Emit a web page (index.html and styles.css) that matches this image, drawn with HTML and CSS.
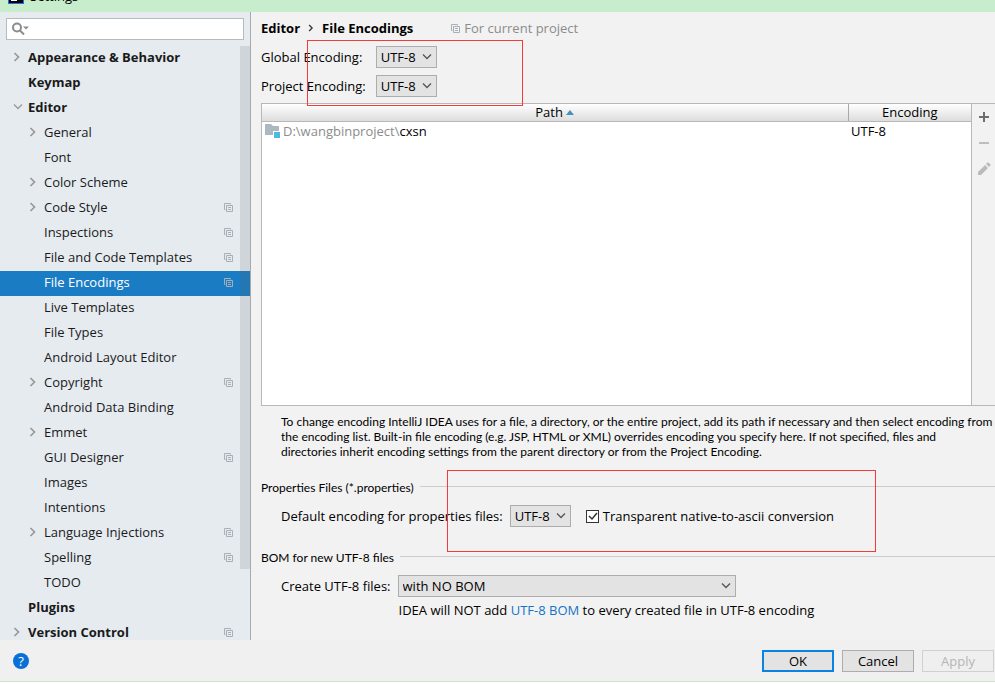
FILE: index.html
```
<!DOCTYPE html>
<html lang="en">
<head>
<meta charset="utf-8">
<title>Settings</title>
<link rel="stylesheet" href="styles.css">
</head>
<body>
<svg class="defs" aria-hidden="true">
  <symbol id="right" viewBox="0 0 8 10"><path d="M1.5 1 5.5 5 1.5 9" fill="none" stroke="currentColor" stroke-width="1.7"/></symbol>
  <symbol id="down" viewBox="0 0 10 8"><path d="M1 1.5 5 5.5 9 1.5" fill="none" stroke="currentColor" stroke-width="1.3"/></symbol>
  <symbol id="copy" viewBox="0 0 9 9"><path d="M1.5 6.5H.5V.5h6v1M2.5 2.5h6v6h-6zM4 4.5h3M4 6.5h3" fill="none" stroke="currentColor"/></symbol>
</svg>
<div class="window">
  <header class="titlebar">
    <svg class="logo" viewBox="0 0 16 16"><path fill="#1674e8" d="M0 0h16v16H0z"/><path d="M1 0h14v15H1z"/><path fill="#fff" d="M3 12h6v1H3zM3 3h1v6H3z"/></svg>
    <span class="title">Settings</span>
  </header>
  <div class="body">
    <aside class="sidebar">
      <div class="search">
        <svg viewBox="0 0 20 14"><circle cx="6" cy="5.5" r="4" fill="none" stroke="#8c8c8c" stroke-width="2"/><path d="m9 8.500 4 4" stroke="#8c8c8c" stroke-width="2"/><path fill="#8c8c8c" d="M12 4.500h6l-3 3z"/></svg>
        <input type="text" aria-label="Search settings">
      </div>
      <nav class="tree">
        <ul class="items">
          <li class="top"><svg class="arrow"><use href="#right"/></svg><a href="#">Appearance &amp; Behavior</a></li>
          <li class="top"><span class="arrow"></span><a href="#">Keymap</a></li>
          <li class="top"><svg class="arrow open"><use href="#down"/></svg><a href="#">Editor</a></li>
          <li><svg class="arrow"><use href="#right"/></svg><a href="#">General</a></li>
          <li><span class="arrow"></span><a href="#">Font</a></li>
          <li><svg class="arrow"><use href="#right"/></svg><a href="#">Color Scheme</a></li>
          <li><svg class="arrow"><use href="#right"/></svg><a href="#">Code Style</a><svg class="copy"><use href="#copy"/></svg></li>
          <li><span class="arrow"></span><a href="#">Inspections</a><svg class="copy"><use href="#copy"/></svg></li>
          <li><span class="arrow"></span><a href="#">File and Code Templates</a><svg class="copy"><use href="#copy"/></svg></li>
          <li class="selected"><span class="arrow"></span><a href="#">File Encodings</a><svg class="copy"><use href="#copy"/></svg></li>
          <li><span class="arrow"></span><a href="#">Live Templates</a></li>
          <li><span class="arrow"></span><a href="#">File Types</a></li>
          <li><span class="arrow"></span><a href="#">Android Layout Editor</a></li>
          <li><svg class="arrow"><use href="#right"/></svg><a href="#">Copyright</a><svg class="copy"><use href="#copy"/></svg></li>
          <li><span class="arrow"></span><a href="#">Android Data Binding</a></li>
          <li><svg class="arrow"><use href="#right"/></svg><a href="#">Emmet</a></li>
          <li><span class="arrow"></span><a href="#">GUI Designer</a><svg class="copy"><use href="#copy"/></svg></li>
          <li><span class="arrow"></span><a href="#">Images</a></li>
          <li><span class="arrow"></span><a href="#">Intentions</a></li>
          <li><svg class="arrow"><use href="#right"/></svg><a href="#">Language Injections</a><svg class="copy"><use href="#copy"/></svg></li>
          <li><span class="arrow"></span><a href="#">Spelling</a><svg class="copy"><use href="#copy"/></svg></li>
          <li><span class="arrow"></span><a href="#">TODO</a></li>
          <li class="top"><span class="arrow"></span><a href="#">Plugins</a></li>
          <li class="top"><svg class="arrow"><use href="#right"/></svg><a href="#">Version Control</a><svg class="copy"><use href="#copy"/></svg></li>
        </ul>
        <div class="scrollbar"></div>
      </nav>
    </aside>
    <main class="content">
      <h1 class="crumbs"><span>Editor</span><svg class="sep"><use href="#right"/></svg><span>File Encodings</span><span class="scope"><svg class="copy"><use href="#copy"/></svg>For current project</span></h1>
      <div class="encodings">
        <label for="global">Global Encoding:</label>
        <span class="select"><select id="global"><option>UTF-8</option></select><svg><use href="#down"/></svg></span>
        <label for="project">Project Encoding:</label>
        <span class="select"><select id="project"><option>UTF-8</option></select><svg><use href="#down"/></svg></span>
        <div class="mark mark-top"></div>
      </div>
      <section class="paths">
        <div class="list">
          <table>
            <thead><tr><th>Path <svg class="sort" viewBox="0 0 8 5"><path fill="#3f94bd" d="M4 0 8 5H0z"/></svg></th><th class="enc">Encoding</th></tr></thead>
            <tbody><tr><td><div class="path"><svg class="folder" viewBox="0 0 16 14"><path fill="#adb7bf" d="M0 0h6l2 2h6v5H8v4H0z"/><path fill="#4fb9e3" d="M9 8h6v6H9z"/></svg><span><span class="dim">D:\wangbinproject\</span>cxsn</span></div></td><td>UTF-8</td></tr></tbody>
          </table>
        </div>
        <div class="tools">
          <button type="button" aria-label="Add"><svg viewBox="0 0 14 14"><path d="M7 2v10M2 7h10" stroke="#6e6e6e" stroke-width="2"/></svg></button>
          <button type="button" aria-label="Remove" disabled><svg viewBox="0 0 14 14"><path d="M2 7h10" stroke="#bdbdbd" stroke-width="2"/></svg></button>
          <button type="button" aria-label="Edit" disabled><svg viewBox="0 0 14 14"><path fill="#bababa" d="m1 10 7-7 3 3-7 7H1zM9 2l1.500-1.500h1L13.500 2.500v1L12 5z"/></svg></button>
        </div>
      </section>
      <p class="note">To change encoding IntelliJ IDEA uses for a file, a directory, or the entire project, add its path if necessary and then select encoding from<br>the encoding list. Built-in file encoding (e.g. JSP, HTML or XML) overrides encoding you specify here. If not specified, files and<br>directories inherit encoding settings from the parent directory or from the Project Encoding.</p>
      <section class="group">
        <h2>Properties Files (*.properties)</h2>
        <div class="row props">
          <label for="props">Default encoding for properties files:</label>
          <span class="select"><select id="props"><option>UTF-8</option></select><svg><use href="#down"/></svg></span>
          <label class="check"><input type="checkbox" checked><svg viewBox="0 0 13 13"><path d="m3 6 3 3 5-6" fill="none" stroke="#333" stroke-width="1.500"/></svg>Transparent native-to-ascii conversion</label>
        </div>
        <div class="mark mark-props"></div>
      </section>
      <section class="group bom">
        <h2>BOM for new UTF-8 files</h2>
        <div class="row">
          <label for="bom">Create UTF-8 files:</label>
          <div class="select wide"><select id="bom"><option>with NO BOM</option></select><svg><use href="#down"/></svg></div>
          <p class="hint">IDEA will NOT add <a href="#">UTF-8 BOM</a> to every created file in UTF-8 encoding</p>
        </div>
      </section>
    </main>
  </div>
  <footer class="footer">
    <button type="button" class="help" aria-label="Help">?</button>
    <button type="button" class="btn primary">OK</button>
    <button type="button" class="btn">Cancel</button>
    <button type="button" class="btn" disabled>Apply</button>
  </footer>
  <div class="edge"></div>
</div>
</body>
</html>
```
FILE: styles.css
```
* { box-sizing: border-box; }
body { margin: 0; color: #000; background: #fff; font: 13px/18px "Open Sans", "Noto Sans", sans-serif; }
h1, h2, p, ul { margin: 0; padding: 0; }
a { text-decoration: none; }
input, select, button { font: inherit; color: inherit; margin: 0; }
svg { display: block; flex: none; }
.defs { position: absolute; width: 0; height: 0; }
.window { display: flex; flex-direction: column; height: 100vh; overflow: hidden; }

.titlebar { display: flex; align-items: flex-end; gap: 6px; height: 12px; flex: none; padding: 0 0 8px 8px; overflow: hidden; background: #c8edcc; }
.logo { width: 16px; height: 16px; }
.title { line-height: 16px; }

.body { display: flex; flex: 1; min-height: 0; }
.sidebar { display: flex; flex-direction: column; width: 251px; flex: none; background: #e6ebf0; border-right: 1px solid #a9a9a9; }
.search { display: flex; align-items: center; height: 22px; flex: none; margin: 6px 6px 6px; padding-left: 4px; background: #fff; border: 1px solid #bababa; }
.search svg { width: 20px; height: 14px; }
.search input { flex: 1; min-width: 0; border: 0; outline: 0; background: none; }
.tree { position: relative; flex: 1; min-height: 0; overflow: hidden; }
.items { list-style: none; color: #1a1a1a; }
.items li { display: flex; align-items: center; height: 25px; padding: 0 17px 3px 29px; }
.items .top { padding-left: 13px; font-weight: 700; }
.items a { flex: 1; color: inherit; white-space: nowrap; }
.arrow { width: 8px; height: 10px; margin-right: 7px; color: #999; }
.arrow.open { width: 10px; height: 8px; margin-right: 5px; }
.copy { width: 9px; height: 9px; color: #a7b0b8; }
.items .selected { color: #fff; background: #1a7dc4; }
.scrollbar { position: absolute; top: 0; right: 0; width: 10px; height: 88%; background: rgba(90, 90, 90, .15); }

.content { display: flex; flex-direction: column; flex: 1; min-width: 0; padding: 7px 0 21px 10px; background: #f2f2f2; }
.crumbs { display: flex; align-items: center; height: 18px; font-size: 13px; white-space: nowrap; }
.sep { width: 6px; height: 8px; margin: 0 8px; color: #333; }
.scope { display: flex; align-items: center; gap: 4px; margin-left: 38px; font-weight: 400; color: #8c8c8c; }
.encodings { position: relative; display: grid; grid-template-columns: max-content max-content; align-items: center; gap: 7px 10px; margin: 9px 0 6px; }
.select { position: relative; display: inline-block; width: 61px; height: 22px; }
.select select { display: block; width: 100%; height: 100%; padding: 0 4px; appearance: none; border: 1px solid #adadad; border-radius: 0; background: #e3e3e3; }
.select svg { position: absolute; right: 5px; top: 7px; width: 10px; height: 8px; color: #555; pointer-events: none; }
.mark { position: absolute; border: 1px solid #f33b3b; pointer-events: none; }
.mark-top { left: 46px; top: -6px; width: 216px; height: 66px; }
.mark-props { left: 186px; top: -9px; width: 429px; height: 82px; }

.paths { display: flex; flex: 1; min-height: 80px; border: 1px solid #b8b8b8; border-right: 0; }
.list { flex: 1; background: #fff; border-right: 1px solid #b8b8b8; }
table { width: 100%; border-collapse: collapse; table-layout: fixed; }
th { height: 17px; padding: 0; font-weight: 400; line-height: 16px; background: linear-gradient(#fff, #ddd); border-bottom: 1px solid #b8b8b8; }
th + th { border-left: 1px solid #a9a9a9; }
.enc { width: 123px; }
.sort { display: inline-block; width: 8px; height: 5px; vertical-align: 2px; }
td { height: 20px; padding: 0 3px; }
.path { display: flex; align-items: center; gap: 2px; }
.folder { width: 16px; height: 14px; }
.dim { color: #8c8c8c; }
.tools { display: flex; flex-direction: column; gap: 12px; width: 23px; padding: 6px 0 0 5px; }
.tools button { padding: 0; border: 0; background: none; }
.tools svg { width: 14px; height: 14px; }

.note, .group h2 { font-family: Lato, sans-serif; font-size: 12px; }
.note { padding: 8px 0 0 20px; line-height: 15px; white-space: nowrap; }
.group { position: relative; margin-top: 20px; }
.group h2 { display: flex; align-items: center; gap: 6px; font-weight: 400; line-height: 18px; }
.group h2::after { content: ""; flex: 1; height: 1px; margin-bottom: 4px; background: #ccc; }
.bom { margin-top: 22px; }
.row { display: grid; grid-template-columns: max-content 338px; column-gap: 7px; row-gap: 4px; align-items: center; padding: 8px 0 0 20px; }
.props { display: flex; }
.check { display: flex; align-items: center; gap: 4px; position: relative; margin-left: 8px; }
.check input { appearance: none; width: 13px; height: 13px; border: 1px solid #333; background: #fff; }
.check svg { position: absolute; left: 0; width: 13px; height: 13px; }
.wide { width: 100%; }
.hint { grid-column: 2; white-space: nowrap; padding-left: 1px; }
.hint a { color: #1273c8; }

.footer { display: flex; align-items: center; gap: 8px; height: 41px; flex: none; padding: 0 1px 0 13px; background: #f0f0f0; }
.btn { width: 72px; height: 22px; padding: 0; line-height: 18px; border: 1px solid #adadad; background: #e3e3e3; }
.btn:disabled { color: #b5b5b5; border-color: #d0d0d0; background: #efefef; }
.primary { border: 2px solid #0a84e0; }
.help { width: 16px; height: 16px; margin-right: auto; padding: 0; border: 0; border-radius: 50%; line-height: 16px; color: #fff; background: #0a6fd6; }
.edge { height: 4px; flex: none; border-top: 1px solid #c8e6cc; }
```
